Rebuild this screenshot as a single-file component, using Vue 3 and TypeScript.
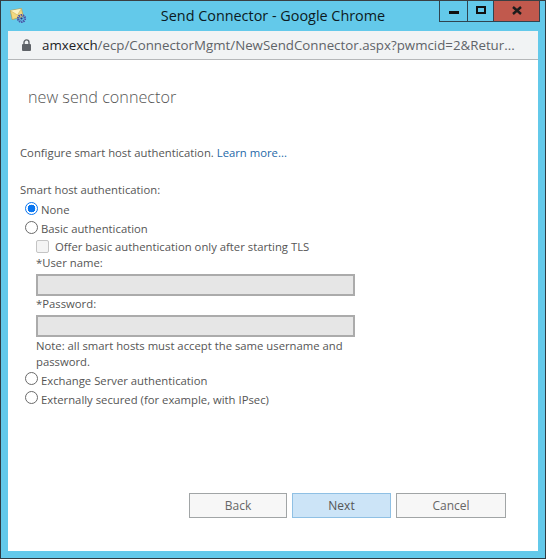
<script setup lang="ts">
</script>

<template>
  <div class="window">
    <header class="titlebar">
      <svg class="appicon" width="17" height="16" viewBox="0 0 17 16">
        <path d="M0.3 2.5 L11.5 0.4 L13.3 8.5 L2.2 11.6 Z" fill="#f2d97f" stroke="#b89c50" stroke-width="0.7" />
        <path d="M0.6 2.8 L7.5 7 L11.4 0.7" fill="#fbf2c4" stroke="#d2b768" stroke-width="0.7" />
        <circle cx="11.5" cy="10.5" r="3.4" fill="none" stroke="#4a56a8" stroke-width="2.4" stroke-dasharray="1.4 0.7" />
        <circle cx="11.5" cy="10.5" r="1.1" fill="#27307c" />
      </svg>
      <div class="title">Send Connector - Google Chrome</div>
      <div class="controls">
        <div class="ctl min"><span class="min-glyph"></span></div>
        <div class="ctl max"><span class="max-glyph"></span></div>
        <div class="ctl close">
          <svg width="10" height="9" viewBox="0 0 10 9">
            <path d="M1 1 L9 8 M9 1 L1 8" stroke="#1c1c1c" stroke-width="2.4" fill="none" />
          </svg>
        </div>
      </div>
    </header>
    <div class="inner">
      <div class="addressbar">
        <svg class="lock" width="9" height="12" viewBox="0 0 9 12">
          <path d="M2 5.5 V3.4 a2.5 2.5 0 0 1 5 0 V5.5" fill="none" stroke="#5f6368" stroke-width="1.4" />
          <rect x="0" y="5" width="9" height="7" rx="1" fill="#5f6368" />
        </svg>
        <div class="url"><span class="host">amxexch</span>/ecp/ConnectorMgmt/NewSendConnector.aspx?pwmcid=2&amp;Retur...</div>
      </div>
      <main class="page">
        <h1 class="heading">new send connector</h1>
        <p class="intro">Configure smart host authentication. <a class="link">Learn more...</a></p>
        <div class="group-label">Smart host authentication:</div>
        <div class="options">
          <label class="radio-row"><span class="radio on"></span>None</label>
          <label class="radio-row"><span class="radio"></span>Basic authentication</label>
          <div class="sub">
            <label class="check-row"><span class="check"></span>Offer basic authentication only after starting TLS</label>
            <div class="field-label">*User name:</div>
            <div class="input"></div>
            <div class="field-label">*Password:</div>
            <div class="input"></div>
            <div class="note">Note: all smart hosts must accept the same username and password.</div>
          </div>
          <label class="radio-row"><span class="radio raised"></span>Exchange Server authentication</label>
          <label class="radio-row"><span class="radio raised"></span>Externally secured (for example, with IPsec)</label>
        </div>
        <footer class="buttons">
          <button class="btn back">Back</button>
          <button class="btn next">Next</button>
          <button class="btn cancel">Cancel</button>
        </footer>
      </main>
    </div>
  </div>
</template>

<style>
html, body { margin: 0; padding: 0; background: #63c9ea; }
</style>

<style scoped>
.window {
  width: 546px;
  height: 559px;
  box-sizing: border-box;
  border: 1px solid #2f3b42;
  border-top-color: #3a3f42;
  background: #63c9ea;
  display: flex;
  flex-direction: column;
  font-family: "Open Sans", "Noto Sans", sans-serif;
  overflow: hidden;
}
.titlebar {
  height: 30px;
  flex: none;
  display: flex;
  position: relative;
  padding-left: 9px;
}
.appicon { margin-top: 7px; }
.title {
  position: absolute;
  left: 0;
  right: 0;
  top: 5px;
  text-align: center;
  font-size: 14.4px;
  line-height: 20px;
  color: #0c1a22;
}
.controls {
  position: absolute;
  right: 5px;
  top: -1px;
  display: flex;
  height: 22px;
  border: 1px solid #2f4450;
  border-top: 0;
  box-sizing: border-box;
}
.ctl { display: flex; align-items: center; justify-content: center; height: 100%; box-sizing: border-box; }
.min { width: 28px; border-right: 1px solid #2f4450; }
.max { width: 26px; border-right: 1px solid #2f4450; }
.close { width: 45px; background: #c1594d; }
.min-glyph { width: 10px; height: 3px; background: #111; margin-top: 3px; }
.max-glyph { width: 6px; height: 4px; border: 2px solid #111; margin-top: -2px; }
.inner {
  margin: 0 7px;
  flex: 1;
  display: flex;
  flex-direction: column;
  min-height: 0;
}
.addressbar {
  height: 29px;
  flex: none;
  box-sizing: border-box;
  background: #f1f3f4;
  border-bottom: 1px solid #b5b7b9;
  display: flex;
  align-items: center;
  padding-left: 14px;
}
.lock { margin-right: 11px; flex: none; margin-top: -1px; }
.url {
  font-size: 13.3px;
  color: #5f6368;
  white-space: nowrap;
}
.host { color: #202124; }
.page {
  flex: 1;
  background: #fff;
  margin-bottom: 7px;
  padding-left: 12px;
  display: flex;
  flex-direction: column;
  color: #555;
  font-size: 11.3px;
  line-height: 16px;
}
.heading {
  margin: 26px 0 0 8px;
  font-weight: 300;
  font-size: 16.2px;
  line-height: 22px;
  color: #555;
}
.intro { margin: 37px 0 0; height: 16px; }
.link { color: #1e68a8; }
.group-label { margin-top: 21px; }
.options { margin-top: 2px; padding-left: 5px; display: flex; flex-direction: column; }
.radio-row {
  display: flex;
  align-items: center;
  height: 19px;
}
.radio {
  width: 13px;
  height: 13px;
  box-sizing: border-box;
  border: 1px solid #6a6a6a;
  border-radius: 50%;
  margin-right: 3px;
  margin-top: -2px;
  background: #fff;
  flex: none;
}
.radio.raised { margin-top: -5px; }
.radio.on {
  border: 1.5px solid #0a76f0;
  background: radial-gradient(circle, #0a76f0 0 3.6px, #fff 4.1px);
}
.sub { padding-left: 11px; width: 320px; }
.check-row { display: flex; align-items: center; height: 17px; }
.check {
  width: 13px;
  height: 13px;
  box-sizing: border-box;
  border: 1px solid #c4c4c4;
  border-radius: 2px;
  background: #f4f4f4;
  margin-right: 6px;
  flex: none;
}
.field-label { height: 16px; }
.input {
  height: 22px;
  box-sizing: border-box;
  border: 2px solid #ababab;
  background: #e6e6e6;
  margin-top: 3px;
  width: 319px;
}
.note { margin: 1px 0 1px; width: 319px; }
.buttons {
  margin-top: auto;
  margin-bottom: 33px;
  display: flex;
  padding-left: 169px;
  gap: 5px;
}
.btn {
  height: 25px;
  box-sizing: border-box;
  border: 1px solid #a1a5a6;
  background: #f7f7f7;
  color: #666;
  font: inherit;
  font-size: 12px;
  padding: 0;
}
.back { width: 98px; }
.next { width: 99px; background: #cce4f7; border-color: #8fc0e4; color: #555; }
.cancel { width: 110px; }
</style>
